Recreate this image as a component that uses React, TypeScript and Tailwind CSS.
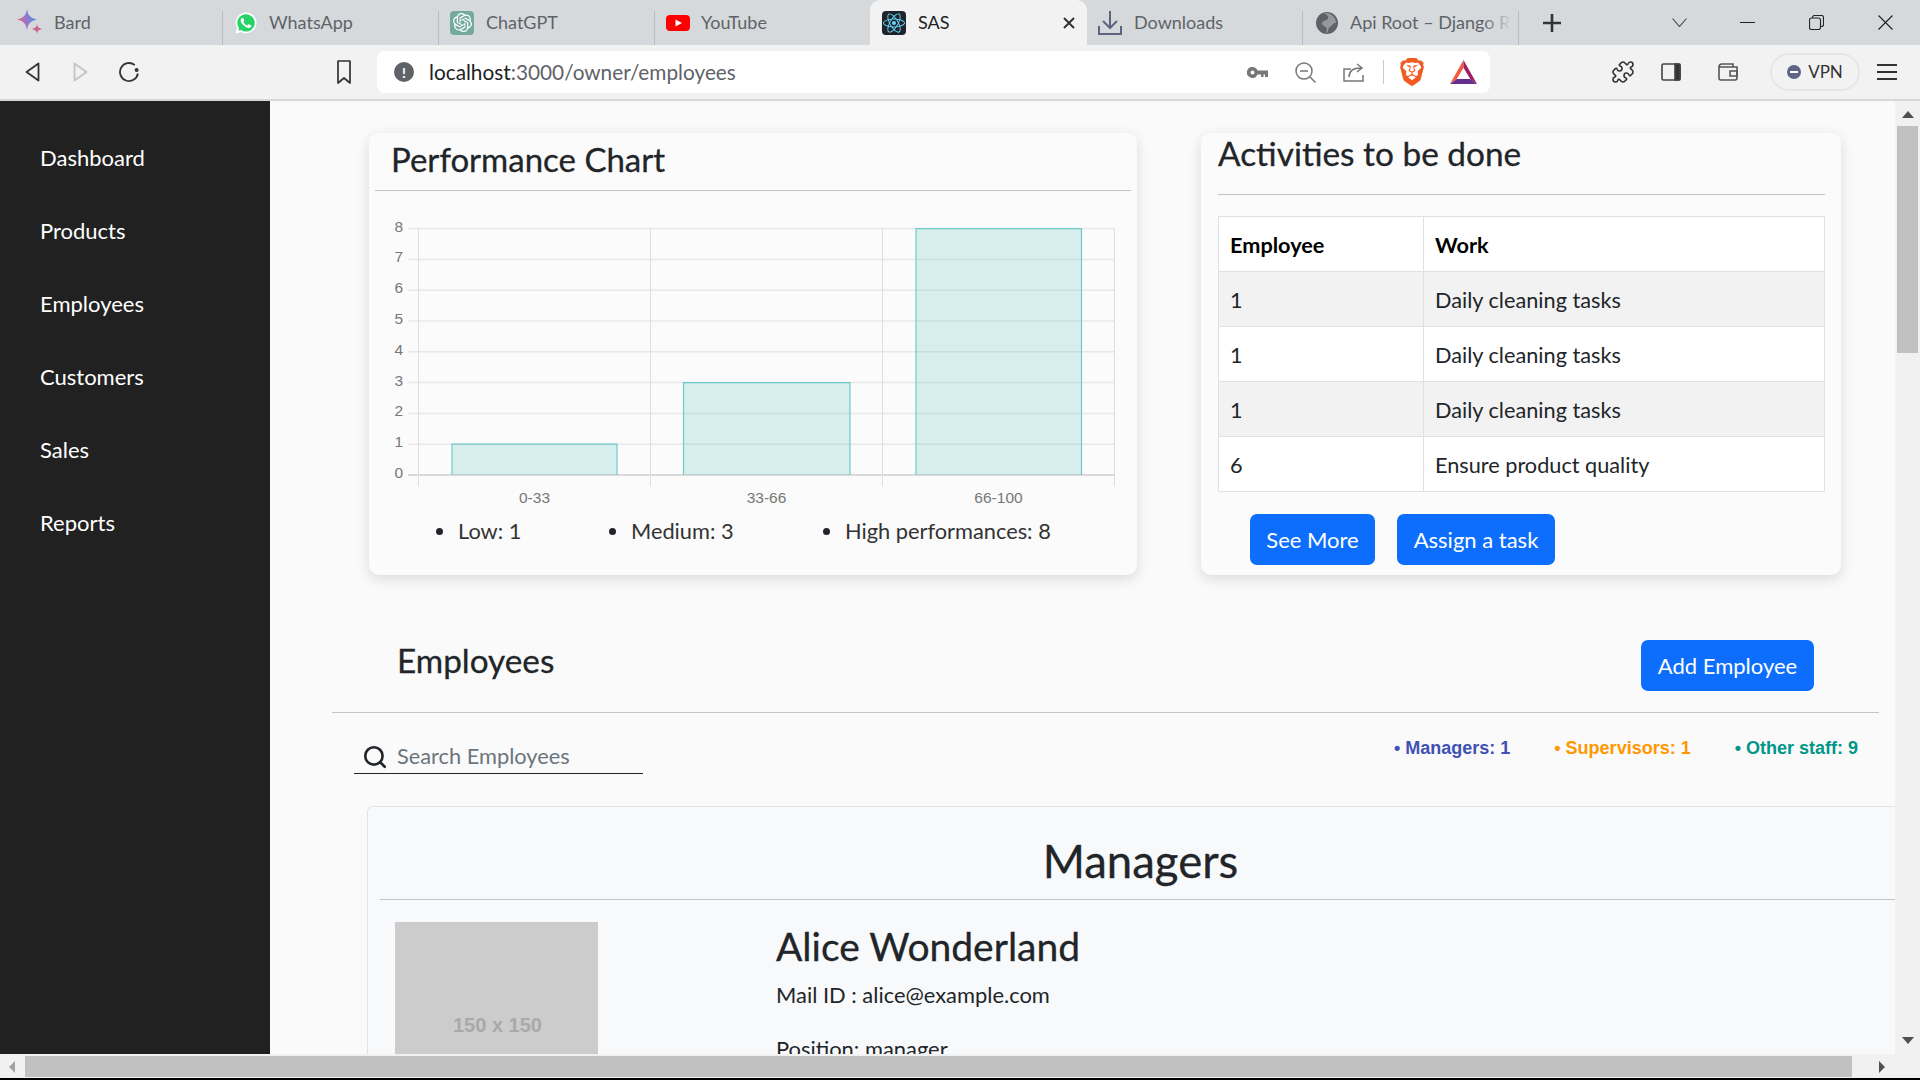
import type { ReactNode } from "react";
import { Puzzle, Search } from "lucide-react";
import { FaWhatsapp, FaReact } from "react-icons/fa";
import { SiBrave, SiOpenai } from "react-icons/si";

const FONT = "font-['Lato','Noto_Sans',sans-serif]";
const HEAD = "[-webkit-text-stroke:0.3px]";

const NAV = ["Dashboard", "Products", "Employees", "Customers", "Sales", "Reports"];

const TASKS = [
  ["1", "Daily cleaning tasks"],
  ["1", "Daily cleaning tasks"],
  ["1", "Daily cleaning tasks"],
  ["6", "Ensure product quality"],
];

const BarsChart = () => {
  const ys = [0, 1, 2, 3, 4, 5, 6, 7, 8];
  const yAt = (v: number) => 474 - v * 30.8;
  return (
    <svg width="756" height="290" viewBox="375 215 756 290" className="mt-[25px] block">
      {ys.map((v) => (
        <g key={v}>
          <line x1="408" x2="1115" y1={yAt(v)} y2={yAt(v)} stroke={v === 0 ? "#cfcfcf" : "#e8e8e8"} strokeWidth="1.5" />
          <text x="403" y={yAt(v) + 3} textAnchor="end" fontSize="15.5" fill="#777" fontFamily="Liberation Sans">
            {v}
          </text>
        </g>
      ))}
      {[418.5, 650.5, 882.5, 1114.5].map((x) => (
        <line key={x} x1={x} x2={x} y1="227" y2="485" stroke="#dedede" />
      ))}
      {[
        [452, 617, 1],
        [683.5, 850, 3],
        [916, 1081.5, 8],
      ].map(([a, b, v]) => (
        <path key={a} d={`M${a} 474V${yAt(v)}H${b}V474`} fill="rgba(75,192,192,0.2)" stroke="#6fcaca" strokeWidth="1.2" />
      ))}
      {[
        [534.5, "0-33"],
        [766.5, "33-66"],
        [998.5, "66-100"],
      ].map(([x, t]) => (
        <text key={t} x={x} y="502" textAnchor="middle" fontSize="15.5" fill="#777" fontFamily="Liberation Sans">
          {t}
        </text>
      ))}
    </svg>
  );
};

const Tab = ({ icon, label, cls, sep = true, fade }: { icon: ReactNode; label: string; cls: string; sep?: boolean; fade?: boolean }) => (
  <div className={`relative flex h-[45px] shrink-0 items-center text-[18px] text-[#5f6368] ${cls}`}>
    <span className="flex h-6 w-6 items-center justify-center">{icon}</span>
    {fade ? (
      <span className="relative w-[162px] overflow-hidden whitespace-nowrap">
        {label}
        <span className="absolute inset-y-0 right-0 w-[30px] bg-gradient-to-r from-transparent to-[#d6d9dc]" />
      </span>
    ) : (
      <span>{label}</span>
    )}
    {sep && <span className="absolute top-[11px] right-0 h-[34px] w-px bg-[#b9bdc1]" />}
  </div>
);

export default function App() {
  return (
    <div className={`flex h-[1080px] w-[1920px] flex-col overflow-hidden bg-[#fafafa] text-[#212529] ${FONT}`}>
      {/* tabs */}
      <div className="flex h-[45px] shrink-0 items-center bg-[#d6d9dc]">
        <Tab
          cls="w-[223px] gap-[12px] pl-[18px]"
          label="Bard"
          icon={
            <svg width="26" height="28" viewBox="0 0 26 28" className="shrink-0">
              <defs>
                <linearGradient id="bard" x1="0" y1="0.6" x2="1" y2="0.4">
                  <stop offset="0" stopColor="#e8705f" />
                  <stop offset="0.45" stopColor="#9b72cb" />
                  <stop offset="1" stopColor="#4a9bea" />
                </linearGradient>
              </defs>
              <path d="M10 0c1 6 3 9 10 10.500-7 1.500-9 4.500-10 10.500C9 15 7 12 0 10.500 7 9 9 6 10 0z" fill="url(#bard)" />
              <path d="M20 15c.5 3 1.500 4 5 5-3.500 1-4.500 2-5 5-.5-3-1.500-4-5-5 3.500-1 4.500-2 5-5z" fill="#c9658f" />
            </svg>
          }
        />
        <Tab
          cls="w-[216px] gap-[11px] pl-[11px]"
          label="WhatsApp"
          icon={
            <span className="relative flex h-6 w-6 items-center justify-center">
              <span className="absolute h-[20px] w-[20px] rounded-full bg-[#25d366]" />
              <FaWhatsapp className="relative text-[24px] text-white" />
            </span>
          }
        />
        <Tab
          cls="w-[216px] gap-[12px] pl-[11px]"
          label="ChatGPT"
          icon={
            <span className="flex h-6 w-6 items-center justify-center rounded bg-[#74aa9c]">
              <SiOpenai className="text-[19px] text-white" />
            </span>
          }
        />
        <Tab
          cls="w-[215px] gap-[11px] pl-[11px]"
          label="YouTube"
          sep={false}
          icon={
            <svg width="24" height="16" viewBox="0 0 24 16">
              <rect width="24" height="16" rx="4" fill="#ff0000" />
              <path d="M9.500 4.500l6.500 3.500-6.500 3.500z" fill="#fff" />
            </svg>
          }
        />
        <div className="flex h-[45px] w-[217px] shrink-0 items-center rounded-t-[10px] bg-[#f2f2f2] pr-[12px] pl-[12px] text-[18px] text-[#202124]">
          <span className="flex h-6 w-6 items-center justify-center rounded-sm bg-[#20232a]">
            <FaReact className="text-[22px] text-[#61dafb]" />
          </span>
          <span className="ml-[12px] flex-1">SAS</span>
          <svg width="12" height="12" viewBox="0 0 12 12" fill="none" stroke="#333" strokeWidth="2">
            <path d="M1 1l10 10M11 1L1 11" />
          </svg>
        </div>
        <div className="relative flex h-[45px] w-[216px] shrink-0 items-center gap-[12px] pl-[11px] text-[18px] text-[#5f6368]">
          <svg width="24" height="24" viewBox="0 0 24 24" fill="none" stroke="#5f6380" strokeWidth="2">
            <path d="M12 0v17M5 10l7 7 7-7M1 15v8h22v-8" />
          </svg>
          <span>Downloads</span>
          <span className="absolute top-[11px] right-0 h-[34px] w-px bg-[#b9bdc1]" />
        </div>
        <Tab
          cls="w-[216px] gap-[11px] pl-[12px]"
          label="Api Root – Django REST"
          fade
          icon={
            <svg width="22" height="22" viewBox="0 0 22 22">
              <circle cx="11" cy="11" r="11" fill="#5f6368" />
              <path d="M8 1c3 2 5 3 4 6-2 2-5 1-6 4 0 3 4 3 5 6l-1 4c3 0 1-4 4-6s3-4 6-4c0-5-4-9-9-10z" fill="#d6d9dc" opacity="0.45" />
            </svg>
          }
        />
        <svg className="ml-[24px]" width="18" height="18" viewBox="0 0 18 18" stroke="#333" strokeWidth="2.600">
          <path d="M9 0v18M0 9h18" />
        </svg>
        <div className="mr-[27px] ml-auto flex items-center">
          <svg width="15" height="9" viewBox="0 0 15 9" fill="none" stroke="#444" strokeWidth="1.100">
            <path d="M0.500 0.500l7 8 7-8" />
          </svg>
          <span className="ml-[53px] h-px w-[15px] bg-[#222]" />
          <svg className="ml-[54px]" width="15" height="15" viewBox="0 0 15 15" fill="none" stroke="#222" strokeWidth="1.100">
            <rect x="0.500" y="3" width="11" height="11.500" rx="2" />
            <path d="M3.500 3V2.500a2 2 0 012-2h7a2 2 0 012 2v7a2 2 0 01-2 2H12" />
          </svg>
          <svg className="ml-[54px]" width="15" height="15" viewBox="0 0 15 15" fill="none" stroke="#222" strokeWidth="1.200">
            <path d="M0.500 0.500l14 14M14.500 0.500l-14 14" />
          </svg>
        </div>
      </div>

      {/* toolbar */}
      <div className="flex h-[56px] shrink-0 items-center border-b-2 border-[#d5d8da] bg-[#f2f2f2]">
        <svg className="ml-[25px]" width="15" height="20" viewBox="0 0 15 20" fill="none" stroke="#333" strokeWidth="1.800" strokeLinejoin="round">
          <path d="M13.500 1.500L1.500 10l12 8.500z" />
        </svg>
        <svg className="ml-[33px]" width="15" height="20" viewBox="0 0 15 20" fill="none" stroke="#c4c4c4" strokeWidth="1.800" strokeLinejoin="round">
          <path d="M1.500 1.500L13.500 10l-12 8.500z" />
        </svg>
        <svg className="ml-[31px]" width="20" height="20" viewBox="0 0 20 20" fill="none" stroke="#333" strokeWidth="1.800">
          <path d="M15.800 3.100A9 9 0 1018.900 11.500" />
          <circle cx="17.600" cy="8" r="2" fill="#333" stroke="none" />
        </svg>
        <svg className="ml-[198px]" width="14" height="24" viewBox="0 0 14 24" fill="none" stroke="#333" strokeWidth="1.700" strokeLinejoin="round">
          <path d="M1 1h12v22l-6-5-6 5z" />
        </svg>
        <div className="ml-[26px] flex h-[42px] w-[1113px] shrink-0 items-center rounded-[8px] bg-white pr-[13px] text-[20.800px]">
          <span className="ml-[17px] flex h-[20px] w-[20px] items-center justify-center rounded-full bg-[#5f6368] text-[14px] font-bold text-white">!</span>
          <span className="ml-[15px] text-[#202124]">localhost</span>
          <span className="text-[#5f6368]">:3000/owner/employees</span>
          <svg className="ml-auto" width="21" height="11" viewBox="0 0 21 11" fill="#777">
            <path d="M5.500 0a5.500 5.500 0 105 7.500H14V10h2.500V7.500H18V10h3V3.500H10.500A5.500 5.500 0 005.500 0zm0 3.500a2 2 0 110 4 2 2 0 010-4z" />
          </svg>
          <svg className="ml-[27px]" width="21" height="21" viewBox="0 0 21 21" fill="none" stroke="#777" strokeWidth="1.500">
            <circle cx="9" cy="9" r="8" />
            <path d="M5 9h8M15 15l5.500 5.500" />
          </svg>
          <svg className="ml-[27px]" width="21" height="19" viewBox="0 0 21 19" fill="none" stroke="#777" strokeWidth="1.500">
            <path d="M8 6H1v12h19v-6M6 14c0-6 4-9 12-9M14 1l5 4-5 4" />
          </svg>
          <span className="ml-[19px] h-[24px] w-px bg-[#ccc]" />
          <SiBrave className="ml-[14px] text-[28px] text-[#f15a22]" />
          <svg className="ml-[24px]" width="27" height="24" viewBox="0 0 27 24">
            <path d="M13.500 0v8L7 19l-7 5z" fill="#f15a3c" />
            <path d="M13.500 0L27 24l-7-5-6.500-11z" fill="#9e1f63" />
            <path d="M0 24l7-5h13l7 5z" fill="#662d91" />
            <path d="M13.500 8L20 19H7z" fill="#fff" />
          </svg>
        </div>
        <Puzzle className="ml-[121px] text-[#333]" size={24} strokeWidth={1.600} />
        <svg className="ml-[26px]" width="20" height="18" viewBox="0 0 20 18" fill="none" stroke="#444" strokeWidth="1.600">
          <rect x="1" y="1" width="18" height="16" rx="1.500" />
          <path d="M14 1h4a1 1 0 011 1v14a1 1 0 01-1 1h-4z" fill="#333" />
        </svg>
        <svg className="ml-[37px]" width="20" height="18" viewBox="0 0 20 18" fill="none" stroke="#555" strokeWidth="1.600">
          <path d="M1 4a3 3 0 013-3h11v3M1 4v11a2 2 0 002 2h14a2 2 0 002-2V4z" />
          <path d="M12 8h7v5h-7z" />
        </svg>
        <div className="ml-[32px] flex h-[38px] w-[90px] items-center justify-center gap-[7px] rounded-full border-2 border-[#e6e6e6] text-[17px] text-[#333]">
          <span className="flex h-[14px] w-[14px] items-center justify-center rounded-full bg-[#5f6488]">
            <span className="h-[2px] w-[8px] bg-white" />
          </span>
          VPN
        </div>
        <div className="ml-[17px] flex w-[20px] flex-col gap-[5px]">
          <span className="h-[2px] bg-[#333]" />
          <span className="h-[2px] bg-[#333]" />
          <span className="h-[2px] bg-[#333]" />
        </div>
      </div>

      <div className="flex min-h-0 flex-1">
        {/* sidebar */}
        <div className="w-[270px] shrink-0 bg-[#212121] pt-[39px] pl-[40px] text-[22px] text-white">
          {NAV.map((n) => (
            <div key={n} className="flex h-[73px] items-start pt-[1px]">
              {n}
            </div>
          ))}
        </div>

        {/* page */}
        <div className="min-w-0 flex-1 overflow-hidden">
          <div className="w-[1625px] pt-[32px]">
            <div className="flex items-start pl-[99px]">
              <div className="h-[442px] w-[768px] shrink-0 rounded-[10px] bg-[#fbfbfb] px-[6px] shadow-[0_4px_14px_rgba(0,0,0,0.13)]">
                <h2 className={`flex h-[58px] items-center border-b border-[#c4c4c4] pb-[4px] pl-[16px] text-[33px] ${HEAD}`}>Performance Chart</h2>
                <BarsChart />
                <ul className="mt-[9px] flex text-[21.800px] text-[#333]">
                  <li className="ml-[61px] flex w-[173px] items-center gap-[15px]">
                    <span className="h-[7px] w-[7px] rounded-full bg-[#212529]" />
                    Low: 1
                  </li>
                  <li className="flex w-[214px] items-center gap-[15px]">
                    <span className="h-[7px] w-[7px] rounded-full bg-[#212529]" />
                    Medium: 3
                  </li>
                  <li className="flex items-center gap-[15px]">
                    <span className="h-[7px] w-[7px] rounded-full bg-[#212529]" />
                    High performances: 8
                  </li>
                </ul>
              </div>

              <div className="ml-[64px] h-[442px] w-[640px] shrink-0 rounded-[10px] bg-[#fbfbfb] pr-[16px] pl-[17px] shadow-[0_4px_14px_rgba(0,0,0,0.13)]">
                <h2 className={`flex h-[62px] items-start border-b border-[#c4c4c4] text-[33.400px] leading-[40px] ${HEAD}`}>Activities to be done</h2>
                <table className="mt-[21px] w-[607px] table-fixed border-collapse text-[21.700px]">
                  <thead>
                    <tr className="h-[55px] bg-white text-black">
                      <th className="w-[205px] border border-[#dee2e6] pt-[2px] pl-[11px] text-left font-bold">Employee</th>
                      <th className="border border-[#dee2e6] pt-[2px] pl-[11px] text-left font-bold">Work</th>
                    </tr>
                  </thead>
                  <tbody>
                    {TASKS.map(([id, work], i) => (
                      <tr key={i} className={`h-[55px] ${i % 2 === 0 ? "bg-[#f2f2f2]" : "bg-white"}`}>
                        <td className="border border-[#dee2e6] pt-[2px] pl-[11px]">{id}</td>
                        <td className="border border-[#dee2e6] pt-[2px] pl-[11px]">{work}</td>
                      </tr>
                    ))}
                  </tbody>
                </table>
                <div className="mt-[22px] ml-[32px] flex gap-[22px]">
                  <button className="h-[51px] w-[125px] rounded-[7px] bg-[#0d6efd] text-[22px] text-white">See More</button>
                  <button className="h-[51px] w-[158px] rounded-[7px] bg-[#0d6efd] text-[22px] text-white">Assign a task</button>
                </div>
              </div>
            </div>

            <div className="mt-[65px] flex items-start justify-between pr-[81px] pl-[127px]">
              <h3 className={`mt-[-5px] text-[33.300px] leading-[50px] ${HEAD}`}>Employees</h3>
              <button className="h-[51px] w-[173px] rounded-[7px] bg-[#0d6efd] text-[22px] text-white">Add Employee</button>
            </div>
            <div className="mt-[21px] ml-[62px] w-[1547px] border-t border-[#c4c4c4]" />

            <div className="mt-[16px] flex items-start pr-[37px] pl-[84px]">
              <div className="flex h-[45px] w-[289px] items-center border-b border-[#212529] pt-[11px] pl-[8px] text-[21.800px] text-[#6c757d]">
                <Search size={26} strokeWidth={2.400} className="mr-[9px] text-[#212529]" />
                Search Employees
              </div>
              <div className="ml-auto flex gap-[44px] pt-[6px] font-['Liberation_Sans',sans-serif] text-[18px] font-bold">
                <span className="text-[#3f51b5]">• Managers: 1</span>
                <span className="text-[#ff9800]">• Supervisors: 1</span>
                <span className="text-[#009688]">• Other staff: 9</span>
              </div>
            </div>

            <div className="mt-[32px] ml-[97px] h-[400px] rounded-tl-[6px] border-t border-l border-[#e2e4e6] bg-[#f8f9fa] pl-[12px]">
              <h2 className={`flex h-[93px] items-center justify-center border-b border-[#c4c4c4] pt-[17px] pl-[6px] text-[45.500px] text-[#212529] ${HEAD}`}>Managers</h2>
              <div className="flex pt-[22px] pl-[15px]">
                <div className="flex h-[203px] w-[203px] shrink-0 items-end justify-center bg-[#cccccc] pb-[85px] pl-[2px] font-['Liberation_Sans',sans-serif] text-[20px] font-bold text-[#a9a9a9]">
                  150 x 150
                </div>
                <div className="-mt-[1px] ml-[178px]">
                  <div className={`text-[39px] leading-[50px] ${HEAD}`}>Alice Wonderland</div>
                  <div className="mt-[9px] text-[21.900px] leading-[30px]">Mail ID : alice@example.com</div>
                  <div className="mt-[24px] text-[21.900px] leading-[30px]">Position: manager</div>
                </div>
              </div>
            </div>
          </div>
        </div>

        {/* vertical scrollbar */}
        <div className="flex w-[25px] shrink-0 flex-col items-center bg-[#f1f1f1]">
          <span className="mt-[10px] h-0 w-0 border-x-[6px] border-b-[7px] border-x-transparent border-b-[#505050]" />
          <span className="mt-[8px] h-[227px] w-[21px] bg-[#c1c1c1]" />
          <span className="mt-auto mb-[10px] h-0 w-0 border-x-[6px] border-t-[7px] border-x-transparent border-t-[#505050]" />
        </div>
      </div>

      {/* horizontal scrollbar */}
      <div className="flex h-[24px] shrink-0 items-center bg-[#f1f1f1] pt-[1px]">
        <span className="ml-[9px] h-0 w-0 border-y-[6px] border-r-[6px] border-y-transparent border-r-[#a3a3a3]" />
        <span className="ml-[10px] h-[21px] w-[1827px] bg-[#c1c1c1]" />
        <span className="ml-[27px] h-0 w-0 border-y-[6px] border-l-[6px] border-y-transparent border-l-[#505050]" />
      </div>
      <div className="h-[2px] shrink-0 bg-black" />
    </div>
  );
}
